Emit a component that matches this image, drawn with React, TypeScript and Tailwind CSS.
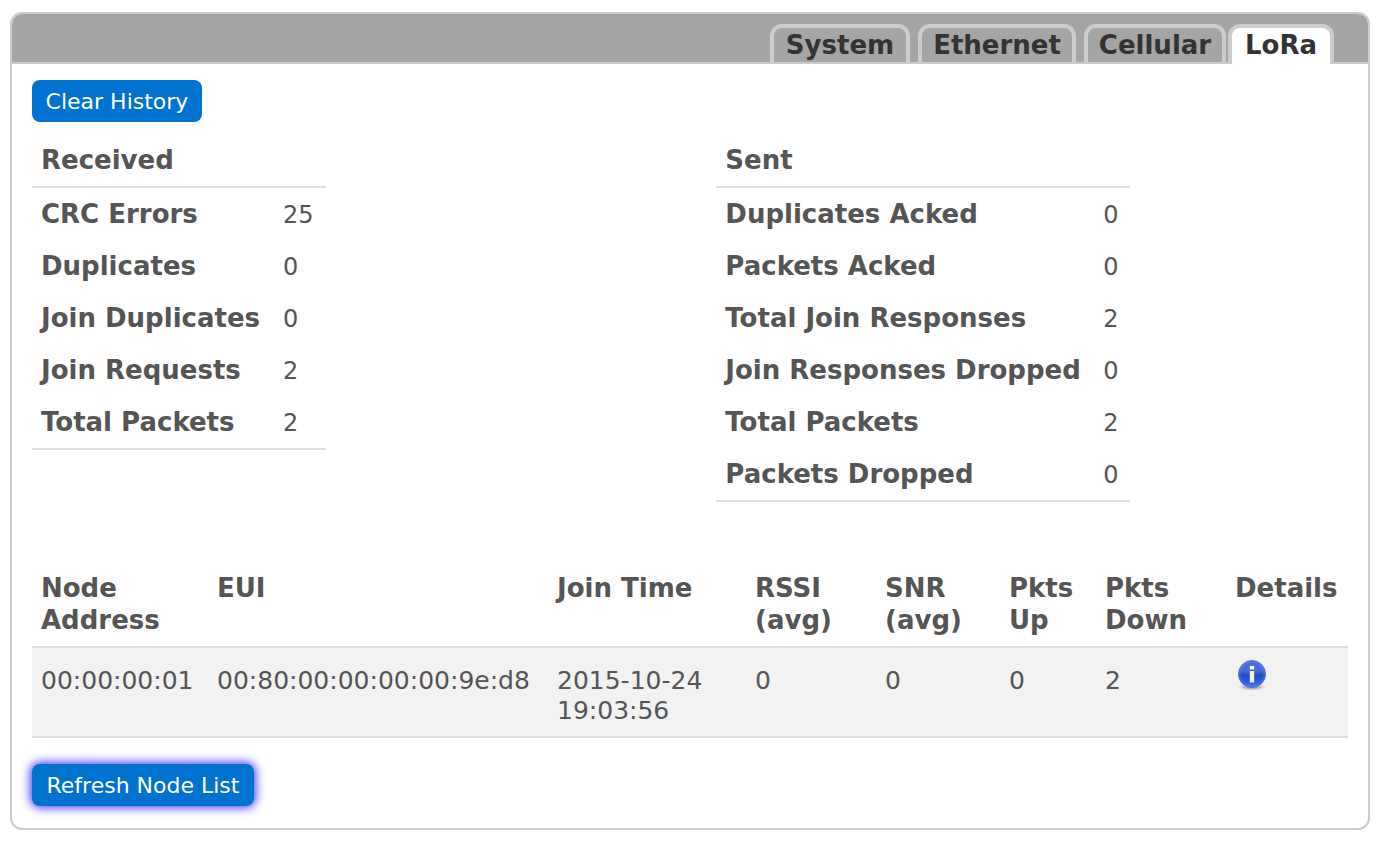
import { useState } from "react";
import clsx from "clsx";

type Stat = { label: string; value: number };

const tabs = [
    { name: "System", className: "w-[140px] mr-2" },
    { name: "Ethernet", className: "w-[158px] mr-2" },
    { name: "Cellular", className: "w-[142px] mr-0.5" },
    { name: "LoRa", className: "w-[106px]" },
];

const received: Stat[] = [
    { label: "CRC Errors", value: 25 },
    { label: "Duplicates", value: 0 },
    { label: "Join Duplicates", value: 0 },
    { label: "Join Requests", value: 2 },
    { label: "Total Packets", value: 2 },
];

const sent: Stat[] = [
    { label: "Duplicates Acked", value: 0 },
    { label: "Packets Acked", value: 0 },
    { label: "Total Join Responses", value: 2 },
    { label: "Join Responses Dropped", value: 0 },
    { label: "Total Packets", value: 2 },
    { label: "Packets Dropped", value: 0 },
];

const columns = [
    { title: "Node Address", className: "w-[176px]" },
    { title: "EUI", className: "w-[340px]" },
    { title: "Join Time", className: "w-[198px]" },
    { title: "RSSI (avg)", className: "w-[130px]" },
    { title: "SNR (avg)", className: "w-[124px]" },
    { title: "Pkts Up", className: "w-[96px]" },
    { title: "Pkts Down", className: "w-[130px]" },
    { title: "Details", className: "w-[122px]" },
];

const nodes = [
    {
        address: "00:00:00:01",
        eui: "00:80:00:00:00:00:9e:d8",
        joinTime: "2015-10-24 19:03:56",
        rssi: 0,
        snr: 0,
        up: 0,
        down: 2,
    },
];

function InfoIcon() {
    return (
        <svg width="32" height="32" viewBox="0 0 32 32" aria-hidden="true">
            <defs>
                <linearGradient id="info-ball" x1="0" y1="0" x2="0" y2="1">
                    <stop offset="0" stopColor="#4a70dc" />
                    <stop offset="0.42" stopColor="#4367d4" />
                    <stop offset="0.54" stopColor="#2149bf" />
                    <stop offset="1" stopColor="#3a70fb" />
                </linearGradient>
                <radialGradient id="info-shadow">
                    <stop offset="0" stopColor="#666" stopOpacity="0.9" />
                    <stop offset="1" stopColor="#777" stopOpacity="0" />
                </radialGradient>
            </defs>
            <ellipse cx="17" cy="28" rx="14" ry="3.5" fill="url(#info-shadow)" />
            <circle cx="17" cy="15" r="13.6" fill="url(#info-ball)" stroke="#5a74c0" strokeWidth="0.8" />
            <circle cx="17" cy="15" r="12.3" fill="none" stroke="#7090ee" strokeOpacity="0.4" />
            <rect x="14.8" y="7" width="4.4" height="3.4" fill="#fff" />
            <rect x="14.8" y="12" width="4.4" height="11.4" fill="#f0f0e8" />
        </svg>
    );
}

function ActionButton({ children, className }: { children: string; className: string }) {
    return (
        <button
            type="button"
            className={clsx("block h-[42px] rounded-lg bg-[#0072d0] text-center text-[22px] text-white whitespace-nowrap cursor-pointer", className)}
        >
            {children}
        </button>
    );
}

function StatTable({ title, stats, className, labelClassName }: { title: string; stats: Stat[]; className: string; labelClassName: string }) {
    return (
        <table className={clsx("table-fixed border-separate border-spacing-0 text-left", className)}>
            <thead>
                <tr className="*:border-b-2 *:border-[#ddd]">
                    <th className={clsx("pt-2 pb-2.5 pl-[9px] text-[26px] leading-8 font-bold", labelClassName)}>{title}</th>
                    <td />
                </tr>
            </thead>
            <tbody>
                {stats.map((stat) => (
                    <tr key={stat.label} className="last:*:border-b-2 last:*:border-[#ddd]">
                        <th scope="row" className="py-2.5 pl-[9px] text-[26px] leading-8 font-bold whitespace-nowrap">{stat.label}</th>
                        <td className="pt-[11px] pb-[9px] pl-[9px] text-2xl leading-8">{stat.value}</td>
                    </tr>
                ))}
            </tbody>
        </table>
    );
}

export default function App() {
    const [active, setActive] = useState("LoRa");

    return (
        <div className="min-h-screen bg-white px-2.5 py-3 font-[DejaVu_Sans,sans-serif] text-[#555]">
            <div className="overflow-hidden rounded-xl border-2 border-[#ccc]">
                <nav className="flex h-[50px] items-end justify-end border-b-2 border-[#ccc] bg-[#a5a5a5] pr-[34px]" role="tablist">
                    {tabs.map((tab) => (
                        <button
                            key={tab.name}
                            type="button"
                            role="tab"
                            aria-selected={active === tab.name}
                            onClick={() => setActive(tab.name)}
                            className={clsx(
                                "rounded-t-xl border-4 border-b-0 border-[#ccc] text-[26px] leading-8 font-bold text-[#333] cursor-pointer",
                                active === tab.name ? "-mb-0.5 h-10 bg-white pb-0.5" : "h-[38px]",
                                tab.className,
                            )}
                        >
                            {tab.name}
                        </button>
                    ))}
                </nav>

                <main className="px-5 pt-4 pb-[22px]">
                    <ActionButton className="w-[170px]">Clear History</ActionButton>

                    <div className="mt-3.5 grid grid-cols-[52%_48%] items-start">
                        <StatTable title="Received" stats={received} className="w-[294px]" labelClassName="w-[242px]" />
                        <StatTable title="Sent" stats={sent} className="w-[414px]" labelClassName="w-[378px]" />
                    </div>

                    <table className="mt-[60px] w-full table-fixed border-separate border-spacing-0 text-left">
                        <thead>
                            <tr>
                                {columns.map((column) => (
                                    <th key={column.title} className={clsx("border-b-2 border-[#ddd] pt-2.5 pr-5 pb-2.5 pl-[9px] align-top text-[26px] leading-8 font-bold last:pr-0", column.className)}>
                                        {column.title}
                                    </th>
                                ))}
                            </tr>
                        </thead>
                        <tbody>
                            {nodes.map((node) => (
                                <tr key={node.address} className="bg-[#f2f2f2] align-top text-[25px] leading-[30px] *:border-b-2 *:border-[#ddd] *:pt-[18px] *:pb-2.5 *:pl-[9px]">
                                    <td>{node.address}</td>
                                    <td>{node.eui}</td>
                                    <td className="pr-5">{node.joinTime}</td>
                                    <td>{node.rssi}</td>
                                    <td>{node.snr}</td>
                                    <td>{node.up}</td>
                                    <td>{node.down}</td>
                                    <td className="pt-[11px]!">
                                        <button type="button" aria-label="Node details" className="block cursor-pointer">
                                            <InfoIcon />
                                        </button>
                                    </td>
                                </tr>
                            ))}
                        </tbody>
                    </table>

                    <ActionButton className="mt-[26px] w-[222px] shadow-[0_0_10px_2px_#4a40ff]">Refresh Node List</ActionButton>
                </main>
            </div>
        </div>
    );
}
